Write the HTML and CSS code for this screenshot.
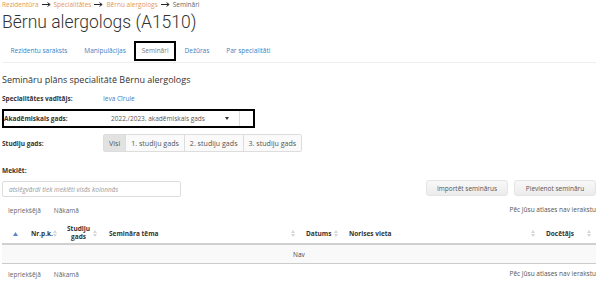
FILE: index.html
```html
<!DOCTYPE html>
<html lang="lv">
<head>
    <meta charset="UTF-8">
    <meta name="viewport" content="width=device-width, initial-scale=1.0">
    <title>Semināri</title>
    <link rel="stylesheet" href="styles.css">
</head>
<body>
    <div class="breadcrumb">
        <a href="#">Rezidentūra</a>
        <svg class="arrow" width="9" height="5" viewBox="0 0 9 5"><path d="M0 2.5H7.5M5.5 0.6L8.2 2.5L5.5 4.4" fill="none" stroke="#222" stroke-width="1"/></svg>
        <a href="#">Specialitātes</a>
        <svg class="arrow" width="9" height="5" viewBox="0 0 9 5"><path d="M0 2.5H7.5M5.5 0.6L8.2 2.5L5.5 4.4" fill="none" stroke="#222" stroke-width="1"/></svg>
        <a href="#">Bērnu alergologs</a>
        <svg class="arrow" width="9" height="5" viewBox="0 0 9 5"><path d="M0 2.5H7.5M5.5 0.6L8.2 2.5L5.5 4.4" fill="none" stroke="#222" stroke-width="1"/></svg>
        <span class="current">Semināri</span>
    </div>

    <h1>Bērnu alergologs (A1510)</h1>

    <ul class="tabs">
        <li><a href="#">Rezidentu saraksts</a></li>
        <li><a href="#">Manipulācijas</a></li>
        <li class="active"><a href="#">Semināri</a></li>
        <li><a href="#">Dežūras</a></li>
        <li><a href="#">Par specialitāti</a></li>
    </ul>

    <h3>Semināru plāns specialitātē Bērnu alergologs</h3>

    <div class="row head">
        <label>Specialitātes vadītājs:</label>
        <a href="#">Ieva Cīrule</a>
    </div>

    <div class="row marked">
        <label>Akadēmiskais gads:</label>
        <div class="select">
            <span>2022./2023. akadēmiskais gads</span>
            <span class="caret"></span>
        </div>
    </div>

    <div class="row years">
        <label>Studiju gads:</label>
        <div class="btn-group">
            <button class="active">Visi</button>
            <button>1. studiju gads</button>
            <button>2. studiju gads</button>
            <button>3. studiju gads</button>
        </div>
    </div>

    <div class="search-row">
        <div class="search">
            <label>Meklēt:</label>
            <input type="text" placeholder="atslēgvārdi tiek meklēti visās kolonnās">
        </div>
        <div class="actions">
            <button>Importēt seminārus</button>
            <button>Pievienot semināru</button>
        </div>
    </div>

    <div class="pager">
        <div><a href="#">Iepriekšējā</a><a href="#">Nākamā</a></div>
        <span>Pēc Jūsu atlases nav ierakstu</span>
    </div>

    <table>
        <colgroup>
            <col style="width: 23px">
            <col style="width: 37px">
            <col style="width: 41px">
            <col style="width: 197px">
            <col style="width: 43px">
            <col style="width: 197px">
            <col style="width: 56px">
        </colgroup>
        <thead>
            <tr>
                <th class="c-sort"><svg width="5" height="4" viewBox="0 0 5 4"><path d="M2.5 0L5 4H0Z" fill="#5b84d0"/></svg></th>
                <th><div class="h"><span>Nr.p.k.</span><svg class="si" width="4" height="7" viewBox="0 0 4 7"><path d="M2 0L4 3H0ZM2 7L0 4H4Z" fill="#d6d6d6"/></svg></div></th>
                <th><div class="h year"><span class="two">Studiju<br>gads</span><svg class="si" width="4" height="7" viewBox="0 0 4 7"><path d="M2 0L4 3H0ZM2 7L0 4H4Z" fill="#d6d6d6"/></svg></div></th>
                <th><div class="h"><span>Semināra tēma</span><svg class="si" width="4" height="7" viewBox="0 0 4 7"><path d="M2 0L4 3H0ZM2 7L0 4H4Z" fill="#d6d6d6"/></svg></div></th>
                <th><div class="h"><span>Datums</span><svg class="si" width="4" height="7" viewBox="0 0 4 7"><path d="M2 0L4 3H0ZM2 7L0 4H4Z" fill="#d6d6d6"/></svg></div></th>
                <th><div class="h"><span>Norises vieta</span><svg class="si" width="4" height="7" viewBox="0 0 4 7"><path d="M2 0L4 3H0ZM2 7L0 4H4Z" fill="#d6d6d6"/></svg></div></th>
                <th><div class="h"><span>Docētājs</span><svg class="si" width="4" height="7" viewBox="0 0 4 7"><path d="M2 0L4 3H0ZM2 7L0 4H4Z" fill="#d6d6d6"/></svg></div></th>
            </tr>
        </thead>
        <tbody>
            <tr><td colspan="7" class="empty">Nav</td></tr>
        </tbody>
    </table>

    <div class="pager bottom">
        <div><a href="#">Iepriekšējā</a><a href="#">Nākamā</a></div>
        <span>Pēc Jūsu atlases nav ierakstu</span>
    </div>
</body>
</html>
```

FILE: styles.css
```css
/* General */
body {
    font-family: "Open Sans", Arial, sans-serif;
    font-size: 6.5px;
    color: #333;
    margin: 0;
    padding: 0 4px 0 2px;
    background: #fff;
}

a {
    color: #3b7fc4;
    text-decoration: none;
}

/* Breadcrumb */
.breadcrumb {
    height: 9px;
    line-height: 9px;
    font-size: 6.5px;
    display: flex;
    align-items: center;
    gap: 3px;
}

.breadcrumb a {
    color: #e49656;
}

.breadcrumb .current {
    color: #666;
}

h1 {
    font-family: Roboto, "Open Sans", sans-serif;
    font-size: 17.5px;
    font-weight: 300;
    margin: 0;
    height: 31px;
    line-height: 26px;
    color: #333;
}

/* Tabs */
.tabs {
    list-style: none;
    margin: 0;
    padding: 0;
    display: flex;
    border-bottom: 1px solid #eee;
    height: 22px;
    align-items: center;
}

.tabs li a {
    display: block;
    padding: 0 8.5px;
    line-height: 18px;
}

.tabs li.active a {
    color: #777;
    border: 2px solid #000;
    padding: 0 5.5px;
    line-height: 16px;
}

h3 {
    font-size: 9px;
    font-weight: 400;
    margin: 10px 0 0;
    line-height: 14px;
}

/* Form rows */
.row {
    display: flex;
    align-items: center;
}

.row label {
    width: 101px;
    font-weight: 700;
    flex-shrink: 0;
}

.head {
    margin-top: 6px;
    height: 10px;
}

.marked {
    margin-top: 6px;
    width: 249px;
    border: 2px solid #000;
    height: 15px;
}

.marked label {
    width: 100px;
}

.select {
    width: 136px;
    height: 15px;
    box-sizing: border-box;
    border-right: 1px solid #ddd;
    display: flex;
    align-items: center;
    justify-content: space-between;
    padding: 0 10px 0 7px;
    color: #555;
}

.caret {
    width: 0;
    height: 0;
    border-left: 2.5px solid transparent;
    border-right: 2.5px solid transparent;
    border-top: 3px solid #333;
}

.years {
    margin-top: 6px;
}

.btn-group {
    display: flex;
    border: 1px solid #ddd;
    border-radius: 2px;
}

.btn-group button {
    font-family: inherit;
    font-size: 7.1px;
    color: #555;
    background: #fafafa;
    border: none;
    border-left: 1px solid #ddd;
    height: 16px;
    padding: 0 5px;
}

.btn-group button:first-child {
    border-left: none;
}

.btn-group button.active {
    background: #e2e2e2;
}

/* Search */
.search-row {
    display: flex;
    justify-content: space-between;
    align-items: flex-end;
    margin-top: 14px;
}

.search label {
    display: block;
    font-weight: 700;
    line-height: 9px;
    margin-bottom: 6px;
}

.search input {
    width: 179px;
    height: 16px;
    box-sizing: border-box;
    border: 1px solid #ddd;
    border-radius: 2px;
    padding: 0 6px;
    font-family: inherit;
    font-size: 6.5px;
    font-style: italic;
}

.search input::placeholder {
    color: #999;
}

.actions {
    display: flex;
    gap: 6px;
    padding-bottom: 1px;
}

.actions button {
    font-family: inherit;
    font-size: 6.5px;
    color: #555;
    width: 82px;
    height: 16px;
    border: 1px solid #e4e4e4;
    border-radius: 3px;
    background: linear-gradient(#f8f8f8, #ececec);
}

/* Pager */
.pager {
    display: flex;
    justify-content: space-between;
    align-items: center;
    height: 17px;
    padding-left: 6px;
    margin-top: 5px;
}

.pager a {
    color: #666;
    margin-right: 13px;
}

.pager span {
    color: #555;
    margin-top: -2px;
}

.pager.bottom {
    margin-top: 2px;
    height: 16px;
}

/* Table */
table {
    width: 594px;
    table-layout: fixed;
    border-collapse: collapse;
    margin-top: 4px;
}

th {
    text-align: left;
    font-weight: 700;
    height: 20px;
    padding: 0 5px 0 6px;
    border-bottom: 2px solid #d0d0d0;
    white-space: nowrap;
}

th .h {
    display: flex;
    align-items: center;
    justify-content: space-between;
}

th .h.year {
    justify-content: flex-start;
    gap: 3px;
    padding-left: 0;
}

th:nth-child(3) {
    padding-left: 5px;
}

.c-sort {
    padding-left: 11px;
}

.two {
    display: inline-block;
    text-align: center;
    line-height: 8px;
}

td.empty {
    text-align: center;
    background: #f9f9f9;
    height: 18px;
    border-bottom: 1px solid #ccc;
    padding: 0;
    color: #444;
}
```
